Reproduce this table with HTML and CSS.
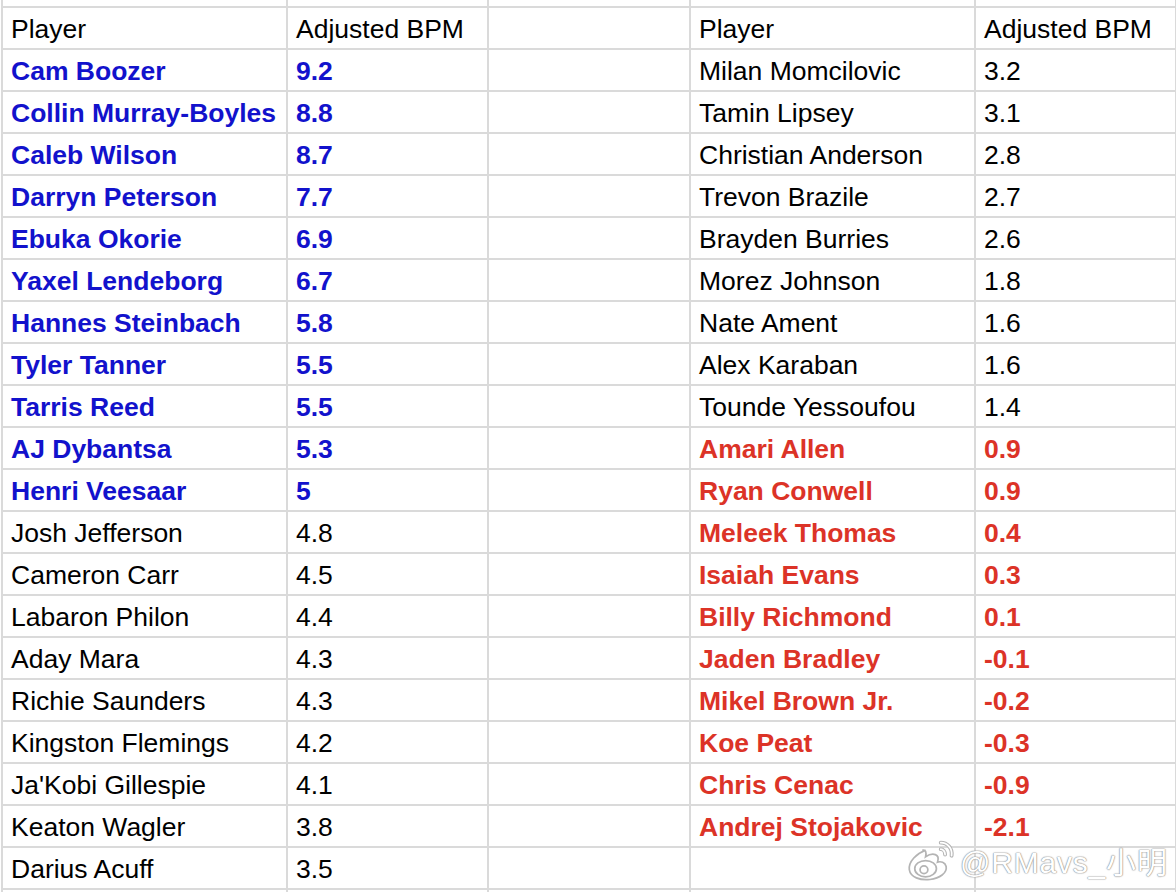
FILE: index.html
```html
<!DOCTYPE html>
<html lang="en">
<head>
<meta charset="utf-8">
<title>Adjusted BPM</title>
<link rel="stylesheet" href="styles.css">
</head>
<body>
<div class="sheet">
<table class="grid">
<colgroup>
<col class="c-name"><col class="c-val"><col class="c-gap"><col class="c-name"><col class="c-val">
</colgroup>
<tbody>
<tr class="cut"><td></td><td></td><td></td><td></td><td></td></tr>
<tr><td>Player</td><td>Adjusted BPM</td><td></td><td>Player</td><td>Adjusted BPM</td></tr>
<tr><td class="b">Cam Boozer</td><td class="b">9.2</td><td></td><td>Milan Momcilovic</td><td>3.2</td></tr>
<tr><td class="b">Collin Murray-Boyles</td><td class="b">8.8</td><td></td><td>Tamin Lipsey</td><td>3.1</td></tr>
<tr><td class="b">Caleb Wilson</td><td class="b">8.7</td><td></td><td>Christian Anderson</td><td>2.8</td></tr>
<tr><td class="b">Darryn Peterson</td><td class="b">7.7</td><td></td><td>Trevon Brazile</td><td>2.7</td></tr>
<tr><td class="b">Ebuka Okorie</td><td class="b">6.9</td><td></td><td>Brayden Burries</td><td>2.6</td></tr>
<tr><td class="b">Yaxel Lendeborg</td><td class="b">6.7</td><td></td><td>Morez Johnson</td><td>1.8</td></tr>
<tr><td class="b">Hannes Steinbach</td><td class="b">5.8</td><td></td><td>Nate Ament</td><td>1.6</td></tr>
<tr><td class="b">Tyler Tanner</td><td class="b">5.5</td><td></td><td>Alex Karaban</td><td>1.6</td></tr>
<tr><td class="b">Tarris Reed</td><td class="b">5.5</td><td></td><td>Tounde Yessoufou</td><td>1.4</td></tr>
<tr><td class="b">AJ Dybantsa</td><td class="b">5.3</td><td></td><td class="r">Amari Allen</td><td class="r">0.9</td></tr>
<tr><td class="b">Henri Veesaar</td><td class="b">5</td><td></td><td class="r">Ryan Conwell</td><td class="r">0.9</td></tr>
<tr><td>Josh Jefferson</td><td>4.8</td><td></td><td class="r">Meleek Thomas</td><td class="r">0.4</td></tr>
<tr><td>Cameron Carr</td><td>4.5</td><td></td><td class="r">Isaiah Evans</td><td class="r">0.3</td></tr>
<tr><td>Labaron Philon</td><td>4.4</td><td></td><td class="r">Billy Richmond</td><td class="r">0.1</td></tr>
<tr><td>Aday Mara</td><td>4.3</td><td></td><td class="r">Jaden Bradley</td><td class="r">-0.1</td></tr>
<tr><td>Richie Saunders</td><td>4.3</td><td></td><td class="r">Mikel Brown Jr.</td><td class="r">-0.2</td></tr>
<tr><td>Kingston Flemings</td><td>4.2</td><td></td><td class="r">Koe Peat</td><td class="r">-0.3</td></tr>
<tr><td>Ja'Kobi Gillespie</td><td>4.1</td><td></td><td class="r">Chris Cenac</td><td class="r">-0.9</td></tr>
<tr><td>Keaton Wagler</td><td>3.8</td><td></td><td class="r">Andrej Stojakovic</td><td class="r">-2.1</td></tr>
<tr><td>Darius Acuff</td><td>3.5</td><td></td><td></td><td></td></tr>
<tr class="cut"><td></td><td></td><td></td><td></td><td></td></tr>
</tbody>
</table>
<div class="watermark">
<svg class="wb-logo" width="52" height="44" viewBox="0 0 48 40" aria-hidden="true">
<g fill="none" stroke="#b4b4b4" stroke-width="1.6">
<path d="M19 11c-8 3-16 10-15 18 1 7 10 10 19 9 9-1 16-6 15-12-1-4-5-5-8-4 1-3 1-6-2-7-3-1-6 0-9 2 1-4 0-7-3-6z" fill="#fff"/>
<ellipse cx="19" cy="28" rx="10" ry="7.5" fill="#fff"/>
<circle cx="17.5" cy="29" r="3.6" fill="#fff"/>
<path d="M33 4c6 0 11 5 10 12" stroke-width="3.6" stroke-linecap="round"/>
<path d="M33 4c6 0 11 5 10 12" stroke="#fff" stroke-width="1.6" stroke-linecap="round"/>
<path d="M33 10c2 0 4 2 4 5" stroke-width="3.6" stroke-linecap="round"/>
<path d="M33 10c2 0 4 2 4 5" stroke="#fff" stroke-width="1.6" stroke-linecap="round"/>
</g>
</svg>
<span class="wb-text">@RMavs_小明</span>
</div>
</div>
</body>
</html>
```

FILE: styles.css
```css
html, body {
  margin: 0;
  padding: 0;
  background: #ffffff;
  overflow: hidden;
}

.sheet {
  position: relative;
  width: 1176px;
  height: 892px;
  overflow: hidden;
  padding-left: 1px;
  box-sizing: border-box;
}

.grid {
  border-collapse: collapse;
  table-layout: fixed;
  width: 1176px;
  font-family: "Liberation Sans", Arial, sans-serif;
  font-size: 26.5px;
  color: #000000;
}

.c-name { width: 285px; }
.c-val { width: 201px; }
.c-gap { width: 202px; }

.grid td {
  height: 40px;
  border: 2px solid #dadada;
  padding: 2px 0 0 8px;
  box-sizing: border-box;
  white-space: nowrap;
  overflow: hidden;
  vertical-align: middle;
  line-height: 38px;
}

.grid tr.cut td {
  height: 7px;
  line-height: 7px;
  padding: 0;
  border-top: none;
}

.grid td.b {
  color: #1212cc;
  font-weight: bold;
}

.grid td.r {
  color: #dc3327;
  font-weight: bold;
}

.watermark {
  position: absolute;
  left: 905px;
  top: 838px;
  display: flex;
  align-items: center;
  gap: 3px;
}

.wb-text {
  font-family: "Liberation Sans", Arial, "Noto Sans CJK SC", sans-serif;
  font-size: 30px;
  letter-spacing: 0.8px;
  color: #ffffff;
  text-shadow: 0 0 1px #8f8f8f, 0 0 1px #8f8f8f, 0 0 2px #b0b0b0;
}
```
